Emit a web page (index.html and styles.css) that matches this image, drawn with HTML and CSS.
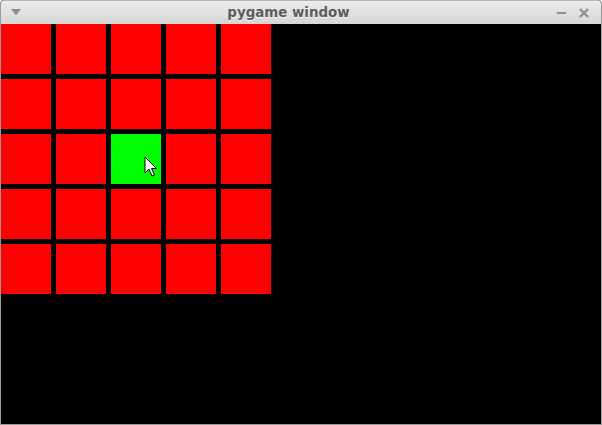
FILE: index.html
```html
<!DOCTYPE html>
<html>
<head>
<meta charset="utf-8">
<link rel="stylesheet" href="styles.css">
</head>
<body>
<div class="window">
  <div class="titlebar">
    <div class="menu-btn"><svg width="10" height="6" viewBox="0 0 10 6"><path d="M0 0 H10 L5 6 Z" fill="#8a8a8a"/></svg></div>
    <div class="title">pygame window</div>
    <div class="controls">
      <svg class="ctl" width="10" height="10" viewBox="0 0 10 10"><rect x="0" y="4" width="9" height="2" fill="#8f8f8f"/></svg>
      <svg class="ctl" width="10" height="10" viewBox="0 0 10 10"><path d="M1 1 L9 9 M9 1 L1 9" stroke="#8f8f8f" stroke-width="2.2"/></svg>
    </div>
  </div>
  <div class="content">
    <div class="grid">
      <div class="cell"></div><div class="cell"></div><div class="cell"></div><div class="cell"></div><div class="cell"></div>
      <div class="cell"></div><div class="cell"></div><div class="cell"></div><div class="cell"></div><div class="cell"></div>
      <div class="cell"></div><div class="cell"></div><div class="cell on"></div><div class="cell"></div><div class="cell"></div>
      <div class="cell"></div><div class="cell"></div><div class="cell"></div><div class="cell"></div><div class="cell"></div>
      <div class="cell"></div><div class="cell"></div><div class="cell"></div><div class="cell"></div><div class="cell"></div>
    </div>
    <svg class="cursor" width="14" height="22" viewBox="0 0 14 22">
      <path d="M1 1 L1 17 L5 13 L8 20 L10.5 19 L7.5 12.5 L12.5 12.5 Z" fill="#fff" stroke="#000" stroke-width="1" stroke-linejoin="round"/>
    </svg>
  </div>
</div>
</body>
</html>
```

FILE: styles.css
```css
html, body {
  margin: 0;
  padding: 0;
  background: #ffffff;
}
.window {
  width: 602px;
  height: 425px;
  box-sizing: border-box;
  border: 1px solid #9a9a9a;
  border-top: none;
  border-radius: 4px 4px 0 0;
  overflow: hidden;
  display: flex;
  flex-direction: column;
  background: #000;
}
.titlebar {
  height: 24px;
  flex: none;
  display: flex;
  align-items: center;
  background: linear-gradient(#ececec, #d6d6d6);
  border-top: 1px solid #b4b4b4;
  box-sizing: border-box;
  position: relative;
  margin: 0 -1px;
}
.menu-btn {
  width: 32px;
  display: flex;
  justify-content: center;
  margin-top: -2px;
}
.title {
  flex: 1;
  text-align: center;
  font-family: "DejaVu Sans", sans-serif;
  font-weight: bold;
  font-size: 13.4px;
  color: #5c5c5c;
  text-shadow: 0 1px 0 #f4f4f4;
  padding-right: 12px;
}
.controls {
  display: flex;
  gap: 12px;
  align-items: center;
  padding-right: 13px;
}
.content {
  flex: 1;
  position: relative;
  background: #000;
}
.grid {
  display: grid;
  grid-template-columns: repeat(5, 50px);
  grid-template-rows: repeat(5, 50px);
  gap: 5px;
}
.cell {
  background: #ff0000;
}
.cell.on {
  background: #00ff00;
}
.cursor {
  position: absolute;
  left: 143px;
  top: 132px;
}
```
